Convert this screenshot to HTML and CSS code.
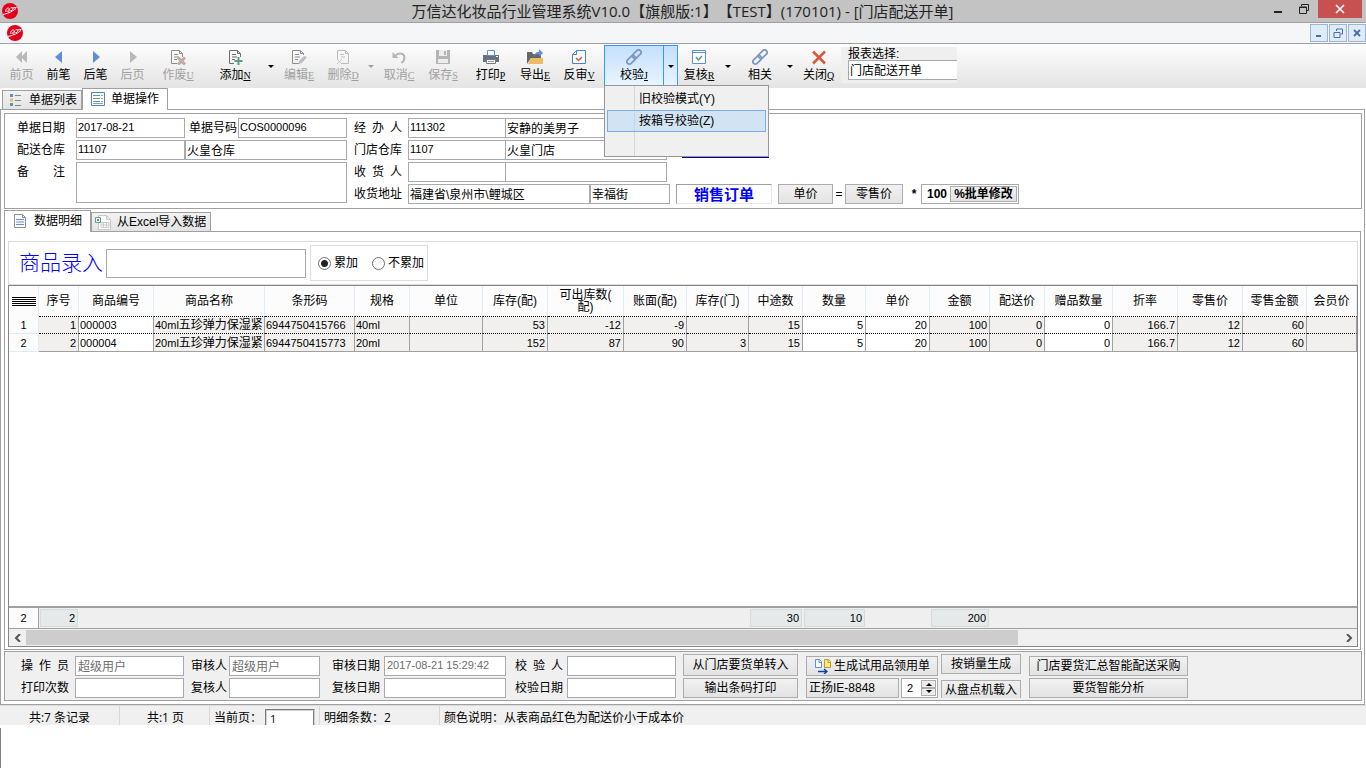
FILE: index.html
```html
<!DOCTYPE html>
<html lang="zh-CN">
<head>
    <meta charset="UTF-8">
    <meta name="viewport" content="width=device-width, initial-scale=1.0">
    <title>万信达化妆品行业管理系统V10.0</title>
    <link rel="stylesheet" href="styles.css">
</head>
<body>
    <svg class="sprite" aria-hidden="true">
        <symbol id="i-logo" viewBox="0 0 16 16">
            <circle cx="8" cy="8" r="8" fill="#e2001a"/>
            <path d="M1 11.500C5 10.500 9 9.500 14 5.500M4 9C3 6 6 4 7.500 5.500M5.500 8.500c1-3 3-2 2.500-1S6 9 6 9M8.500 5c2-1 3 0 2 1.500L9 8M10.500 5l4-.5" fill="none" stroke="#fff" stroke-width="1"/>
        </symbol>
        <symbol id="i-first" viewBox="0 0 16 16"><path d="M8 2v12L2 8zM13 2v12L7 8z" fill="#b9b9b9"/></symbol>
        <symbol id="i-prev" viewBox="0 0 16 16"><path d="M11 2v12L4 8z" fill="#5f8fd8"/></symbol>
        <symbol id="i-next" viewBox="0 0 16 16"><path d="M5 2v12l7-6z" fill="#5f8fd8"/></symbol>
        <symbol id="i-last" viewBox="0 0 16 16"><path d="M5 2v12l7-6z" fill="#b9b9b9"/></symbol>
        <symbol id="i-void" viewBox="0 0 16 16">
            <path d="M7 14.500H1.500v-13h8l3 3V8M9.500 1.500v3h3M4 5.500h4M4 8h5M4 10.500h3" fill="none" stroke="#8c8c8c"/>
            <path d="M8 8.500l7 7M15 8.500l-7 7" stroke="#b9a9a9" stroke-width="3"/>
            <path d="M9.500 10l4 4M13.500 10l-4 4" stroke="#d9a9a4" stroke-width="1"/>
        </symbol>
        <symbol id="i-add" viewBox="0 0 16 16">
            <path d="M7 14.500H2.500v-13h8l3 3V8M10.500 1.500v3h3M5 5.500h4M5 8h5M5 10.500h3" fill="none" stroke="#6f6f6f"/>
            <path d="M11.500 8v8M7.500 12h8" stroke="#5d9e8a" stroke-width="2"/>
        </symbol>
        <symbol id="i-edit" viewBox="0 0 16 16">
            <path d="M8 14.500H1.500v-13h8l3 3V6M9.500 1.500v3h3M4 5.500h4M4 8h5M4 10.500h3" fill="none" stroke="#8c8c8c"/>
            <path d="M8 12l5-5 3 1-5 6-3 1z" fill="#b9bdc6"/>
        </symbol>
        <symbol id="i-delete" viewBox="0 0 16 16">
            <path d="M2.500 10V1.500h8l3 3v10H7M10.500 1.500v3h3M5 5.500h4M6 8h4" fill="none" stroke="#bcbcbc"/>
            <path d="M2 10l5 5M7 10l-5 5" stroke="#c6c6c6"/>
        </symbol>
        <symbol id="i-undo" viewBox="0 0 16 16">
            <path d="M1.500 3v6h6z" fill="#b5b5b5"/>
            <path d="M4 7c3-4 9-3 9.500 1 0 3-1.500 5-3 6" fill="none" stroke="#b5b5b5" stroke-width="2"/>
        </symbol>
        <symbol id="i-save" viewBox="0 0 16 16">
            <path d="M1 1h14v14H1z" fill="#b5b5b5"/><path d="M4 1h8v6H4zM3 10h10v4H3z" fill="#ececec"/><path d="M9 2h2v4H9z" fill="#b5b5b5"/>
        </symbol>
        <symbol id="i-print" viewBox="0 0 16 16">
            <path d="M0 6h16v7H0z" fill="#66717f"/><path d="M4.500 1.500h7v5h-7z" fill="#fff" stroke="#5f8fd8"/>
            <path d="M3.500 10.500h9v4h-9z" fill="#fff" stroke="#777"/><path d="M5 12.500h6" stroke="#999"/><path d="M13 7.500h2" stroke="#fff"/>
        </symbol>
        <symbol id="i-export" viewBox="0 0 16 16">
            <path d="M0 3h5l1 2h8v4H4l-4 6z" fill="#666"/><path d="M4 9h12v6H1z" fill="#ecbd63"/>
            <path d="M7 8c0-3 2-5 5-5V0l4 4-4 4V5C9 5 8 6 7 8z" fill="#5f8fd8"/>
        </symbol>
        <symbol id="i-unaudit" viewBox="0 0 16 16">
            <path d="M5.500 1.500h9v13h-13v-9zM5.500 1.500v4h-4" fill="#fff" stroke="#4b82d8"/>
            <path d="M5 9l2.500 2.500L11 8" fill="none" stroke="#d8543c" stroke-width="1.500"/>
        </symbol>
        <symbol id="i-link" viewBox="0 0 16 16">
            <g fill="none" stroke="#7c97c4" stroke-width="1.800" transform="rotate(-45 8 8)">
                <rect x="-1" y="5.500" width="10" height="5" rx="2.500"/><rect x="7" y="5.500" width="10" height="5" rx="2.500"/>
            </g>
        </symbol>
        <symbol id="i-check" viewBox="0 0 16 16">
            <path d="M1.500 1.500h13v13h-13zM1 3.500h14" fill="#fff" stroke="#5f8fd8"/>
            <path d="M5 8l2.500 3L11 7" fill="none" stroke="#5d9e8a" stroke-width="1.500"/>
        </symbol>
        <symbol id="i-close" viewBox="0 0 16 16"><path d="M2 2.500l12 12M14 2.500l-12 12" stroke="#d9593f" stroke-width="2.500"/></symbol>
        <symbol id="i-list" viewBox="0 0 16 16">
            <path d="M2 2h3v3H2z" fill="#5f8fd8"/><path d="M2 6.500h3v3H2z" fill="#ecbd63"/><path d="M2 11h3v3H2z" fill="#5d9e8a"/>
            <path d="M7 3.500h6M7 8.500h6M7 13.500h6" stroke="#888"/>
        </symbol>
        <symbol id="i-form" viewBox="0 0 16 16">
            <path d="M1.500 1.500h13v13h-13z" fill="#fff" stroke="#4b82d8"/>
            <path d="M3 4.500h7M3 7.500h7M3 10.500h7" stroke="#5d9e8a"/><path d="M11 4.500h2M11 7.500h2M11 10.500h2M3 12.500h10" stroke="#9a9a9a"/>
        </symbol>
        <symbol id="i-doc" viewBox="0 0 16 16">
            <path d="M2.500 1.500h8l3 3v10h-11zM10.500 1.500v3h3" fill="#fff" stroke="#8c8c8c"/>
            <path d="M4 6.500h8M4 9h8M4 11.500h8" stroke="#5f8fd8"/>
        </symbol>
        <symbol id="i-excel" viewBox="0 0 16 16">
            <path d="M3.500 1.500h8l4 4v10h-12zM11.500 1.500v4h4" fill="#fff" stroke="#c9c9c9"/>
            <path d="M6 8.500h8v5H6zM6 11h8M8.500 8.500v5M11.500 8.500v5" fill="none" stroke="#c9c9c9"/>
            <path d="M.5 3.500h5v5h-5zM2 5l2 2M4 5L2 7" fill="#fff" stroke="#5d9e8a"/>
        </symbol>
        <symbol id="i-copy" viewBox="0 0 18 16">
            <path d="M1.500 1.500h4l2 2v6h-6zM5 1.500v3h3" fill="#fff" stroke="#5f8fd8"/>
            <path d="M10.500 1.500h4l2 2v6h-6zM14 1.500v3h3" fill="#ffe98a" stroke="#c59a16"/>
            <path d="M4 13.500h9M10 11l3 2.500-3 2.500" fill="none" stroke="#0b3fa8" stroke-width="1.300"/>
        </symbol>
    </svg>

    <header class="titlebar">
        <svg class="logo"><use href="#i-logo"/></svg>
        <h1>万信达化妆品行业管理系统V10.0【旗舰版:1】【TEST】(170101) - [门店配送开单]</h1>
        <div class="win-buttons">
            <button type="button" aria-label="最小化"><svg viewBox="0 0 12 12"><path d="M2 9h8" stroke="#222" stroke-width="2"/></svg></button>
            <button type="button" aria-label="还原"><svg viewBox="0 0 12 12"><path d="M3.500 3V1.500h7v6H9M1.500 4h7v6.500h-7zM1 4.500h8" fill="none" stroke="#222"/></svg></button>
            <button type="button" class="win-close" aria-label="关闭"><svg viewBox="0 0 12 12"><path d="M2 2l8 8M10 2l-8 8" stroke="#fff" stroke-width="1.600"/></svg></button>
        </div>
    </header>

    <div class="menubar">
        <svg class="logo"><use href="#i-logo"/></svg>
        <div class="mdi-buttons">
            <button type="button" aria-label="最小化窗口"><svg viewBox="0 0 12 12"><path d="M3 9h5" stroke="#4a6ea0" stroke-width="2"/></svg></button>
            <button type="button" aria-label="还原窗口"><svg viewBox="0 0 12 12"><path d="M4.500 4V2h6v5H9M2 5.500h6v5H2z" fill="none" stroke="#4a6ea0"/></svg></button>
            <button type="button" aria-label="关闭窗口"><svg viewBox="0 0 12 12"><path d="M3 3l6 6M9 3l-6 6" stroke="#4a6ea0" stroke-width="1.800"/></svg></button>
        </div>
    </div>

    <nav class="toolbar">
        <button type="button" disabled><svg><use href="#i-first"/></svg><span>前页</span></button>
        <button type="button"><svg><use href="#i-prev"/></svg><span>前笔</span></button>
        <button type="button"><svg><use href="#i-next"/></svg><span>后笔</span></button>
        <button type="button" disabled><svg><use href="#i-last"/></svg><span>后页</span></button>
        <button type="button" disabled><svg><use href="#i-void"/></svg><span>作废<u>U</u></span></button>
        <button type="button"><svg><use href="#i-add"/></svg><span>添加<u>N</u></span></button>
        <button type="button" class="arrow" aria-label="添加选项"></button>
        <button type="button" disabled><svg><use href="#i-edit"/></svg><span>编辑<u>E</u></span></button>
        <button type="button" disabled><svg><use href="#i-delete"/></svg><span>删除<u>D</u></span></button>
        <button type="button" class="arrow" disabled aria-label="删除选项"></button>
        <button type="button" disabled><svg><use href="#i-undo"/></svg><span>取消<u>C</u></span></button>
        <button type="button" disabled><svg><use href="#i-save"/></svg><span>保存<u>S</u></span></button>
        <button type="button"><svg><use href="#i-print"/></svg><span>打印<u>P</u></span></button>
        <button type="button"><svg><use href="#i-export"/></svg><span>导出<u>E</u></span></button>
        <button type="button"><svg><use href="#i-unaudit"/></svg><span>反审<u>V</u></span></button>
        <div class="split">
            <button type="button"><svg><use href="#i-link"/></svg><span>校验<u>J</u></span></button>
            <button type="button" class="arrow" aria-label="校验选项"></button>
            <ul class="menu">
                <li><button type="button">旧校验模式(Y)</button></li>
                <li><button type="button" class="selected">按箱号校验(Z)</button></li>
            </ul>
        </div>
        <button type="button"><svg><use href="#i-check"/></svg><span>复核<u>R</u></span></button>
        <button type="button" class="arrow" aria-label="复核选项"></button>
        <button type="button"><svg><use href="#i-link"/></svg><span>相关</span></button>
        <button type="button" class="arrow" aria-label="相关选项"></button>
        <button type="button"><svg><use href="#i-close"/></svg><span>关闭<u>Q</u></span></button>
        <div class="report">
            <label for="report">报表选择:</label>
            <input type="text" id="report" value="门店配送开单">
        </div>
    </nav>

    <div class="tabs">
        <button type="button" class="tab"><svg><use href="#i-list"/></svg>单据列表</button>
        <button type="button" class="tab active"><svg><use href="#i-form"/></svg>单据操作</button>
    </div>

    <main class="document">
        <form class="bill">
            <div class="bill-left">
                <div class="line">
                    <label for="billDate">单据日期</label>
                    <input type="text" id="billDate" class="num w-code" value="2017-08-21">
                    <label for="billNo" class="tight">单据号码</label>
                    <input type="text" id="billNo" class="num w-fill" value="COS0000096">
                </div>
                <div class="line">
                    <label for="fromStore">配送仓库</label>
                    <input type="text" id="fromStore" class="num w-code" value="11107">
                    <input type="text" class="w-fill" value="火皇仓库" aria-label="配送仓库名称">
                </div>
                <div class="line">
                    <label for="remark">备 注</label>
                    <textarea id="remark" class="w-fill"></textarea>
                </div>
            </div>
            <div class="bill-right">
                <div class="line">
                    <label for="handler">经 办 人</label>
                    <input type="text" id="handler" class="num w-id" value="111302">
                    <input type="text" class="w-name" value="安静的美男子" aria-label="经办人姓名">
                </div>
                <div class="line">
                    <label for="toStore">门店仓库</label>
                    <input type="text" id="toStore" class="num w-id" value="1107">
                    <input type="text" class="w-name" value="火皇门店" aria-label="门店仓库名称">
                    <span class="blue-rule"></span>
                </div>
                <div class="line">
                    <label for="receiver">收 货 人</label>
                    <input type="text" id="receiver" class="w-id">
                    <input type="text" class="w-name" aria-label="收货人姓名">
                </div>
                <div class="line">
                    <label for="address">收货地址</label>
                    <input type="text" id="address" class="w-address" value="福建省\泉州市\鲤城区">
                    <input type="text" class="w-street" value="幸福街" aria-label="街道">
                    <strong class="order-type">销售订单</strong>
                    <button type="button" class="btn btn-price">单价</button>
                    <span class="sign">=</span>
                    <button type="button" class="btn btn-retail">零售价</button>
                    <span class="sign star">*</span>
                    <span class="percent">
                        <input type="text" value="100" aria-label="百分比">
                        <button type="button" class="btn">%批单修改</button>
                    </span>
                </div>
            </div>
        </form>

        <div class="tabs inner">
            <button type="button" class="tab active"><svg><use href="#i-doc"/></svg>数据明细</button>
            <button type="button" class="tab"><svg><use href="#i-excel"/></svg>从Excel导入数据</button>
        </div>

        <section class="detail">
            <div class="entry">
                <label for="goods">商品录入</label>
                <input type="text" id="goods">
                <div class="mode">
                    <label><input type="radio" name="mode" checked>累加</label>
                    <label><input type="radio" name="mode">不累加</label>
                </div>
            </div>

            <div class="grid">
                <div class="grid-body">
                    <table>
                        <colgroup>
                            <col class="c30"><col class="c40"><col class="c75"><col class="c111"><col class="c90"><col class="c55"><col class="c73"><col class="c65"><col class="c76"><col class="c63"><col class="c62"><col class="c54"><col class="c63"><col class="c64"><col class="c60"><col class="c55"><col class="c68"><col class="c65"><col class="c65"><col class="c64"><col>
                        </colgroup>
                        <thead>
                            <tr>
                                <th><span class="lines"></span></th>
                                <th>序号</th>
                                <th>商品编号</th>
                                <th>商品名称</th>
                                <th>条形码</th>
                                <th>规格</th>
                                <th>单位</th>
                                <th>库存(配)</th>
                                <th>可出库数(<br>配)</th>
                                <th>账面(配)</th>
                                <th>库存(门)</th>
                                <th>中途数</th>
                                <th>数量</th>
                                <th>单价</th>
                                <th>金额</th>
                                <th>配送价</th>
                                <th>赠品数量</th>
                                <th>折率</th>
                                <th>零售价</th>
                                <th>零售金额</th>
                                <th>会员价</th>
                            </tr>
                        </thead>
                        <tbody>
                            <tr class="current">
                                <th>1</th>
                                <td>1</td>
                                <td class="text edit">000003</td>
                                <td class="text">40ml<span>五珍弹力保湿紧</span></td>
                                <td class="text">6944750415766</td>
                                <td class="text">40ml</td>
                                <td></td>
                                <td>53</td>
                                <td>-12</td>
                                <td>-9</td>
                                <td></td>
                                <td>15</td>
                                <td class="edit">5</td>
                                <td class="edit">20</td>
                                <td>100</td>
                                <td>0</td>
                                <td class="edit">0</td>
                                <td>166.7</td>
                                <td>12</td>
                                <td>60</td>
                                <td></td>
                            </tr>
                            <tr>
                                <th>2</th>
                                <td>2</td>
                                <td class="text edit">000004</td>
                                <td class="text">20ml<span>五珍弹力保湿紧</span></td>
                                <td class="text">6944750415773</td>
                                <td class="text">20ml</td>
                                <td></td>
                                <td>152</td>
                                <td>87</td>
                                <td>90</td>
                                <td>3</td>
                                <td>15</td>
                                <td class="edit">5</td>
                                <td class="edit">20</td>
                                <td>100</td>
                                <td>0</td>
                                <td class="edit">0</td>
                                <td>166.7</td>
                                <td>12</td>
                                <td>60</td>
                                <td></td>
                            </tr>
                        </tbody>
                    </table>
                </div>
                <table class="totals">
                    <colgroup>
                        <col class="c30"><col class="c40"><col class="c75"><col class="c111"><col class="c90"><col class="c55"><col class="c73"><col class="c65"><col class="c76"><col class="c63"><col class="c62"><col class="c54"><col class="c63"><col class="c64"><col class="c60"><col>
                    </colgroup>
                    <tr>
                        <th>2</th>
                        <td><span>2</span></td>
                        <td colspan="9"></td>
                        <td><span>30</span></td>
                        <td><span>10</span></td>
                        <td></td>
                        <td><span>200</span></td>
                        <td></td>
                    </tr>
                </table>
                <div class="scrollbar">
                    <button type="button" aria-label="向左"><svg viewBox="0 0 8 8"><path d="M6 0L2 4l4 4" fill="none" stroke="#555" stroke-width="2"/></svg></button>
                    <div class="track"><div class="thumb"></div></div>
                    <button type="button" aria-label="向右"><svg viewBox="0 0 8 8"><path d="M2 0l4 4-4 4" fill="none" stroke="#555" stroke-width="2"/></svg></button>
                </div>
            </div>
        </section>

        <section class="audit">
            <div class="pair pair-operator">
                <label for="operator">操 作 员</label><input type="text" id="operator" value="超级用户" disabled>
                <label for="prints">打印次数</label><input type="text" id="prints" disabled>
            </div>
            <div class="pair pair-auditor">
                <label for="auditor">审核人</label><input type="text" id="auditor" value="超级用户" disabled>
                <label for="checker">复核人</label><input type="text" id="checker" disabled>
            </div>
            <div class="pair pair-date">
                <label for="auditDate">审核日期</label><input type="text" id="auditDate" class="num" value="2017-08-21 15:29:42" disabled>
                <label for="checkDate">复核日期</label><input type="text" id="checkDate" disabled>
            </div>
            <div class="pair pair-verify">
                <label for="verifier">校 验 人</label><input type="text" id="verifier" disabled>
                <label for="verifyDate">校验日期</label><input type="text" id="verifyDate" disabled>
            </div>
            <div class="actions a-transfer">
                <button type="button" class="btn">从门店要货单转入</button>
                <button type="button" class="btn">输出条码打印</button>
            </div>
            <div class="actions a-sample">
                <button type="button" class="btn"><svg><use href="#i-copy"/></svg>生成试用品领用单</button>
                <div class="device">
                    <button type="button" class="btn">正扬IE-8848</button>
                    <span class="spinner">
                        <input type="text" value="2" aria-label="端口">
                        <span class="spin">
                            <button type="button" aria-label="增加"><svg viewBox="0 0 6 4"><path d="M0 4l3-3 3 3z"/></svg></button>
                            <button type="button" aria-label="减少"><svg viewBox="0 0 6 4"><path d="M0 0l3 3 3-3z"/></svg></button>
                        </span>
                    </span>
                </div>
            </div>
            <div class="actions a-sales">
                <button type="button" class="btn">按销量生成</button>
                <button type="button" class="btn">从盘点机载入</button>
            </div>
            <div class="actions a-smart">
                <button type="button" class="btn">门店要货汇总智能配送采购</button>
                <button type="button" class="btn">要货智能分析</button>
            </div>
        </section>
    </main>

    <footer class="statusbar">
        <span class="s-records">共:7 条记录</span>
        <span class="s-pages">共:1 页</span>
        <span class="s-current"><label for="page">当前页：</label><input type="text" id="page" value="1"></span>
        <span class="s-lines">明细条数：2</span>
        <span class="s-note">颜色说明：从表商品红色为配送价小于成本价</span>
    </footer>
    <div class="desktop"></div>
</body>
</html>
```
FILE: styles.css
```css
* {
    box-sizing: border-box;
}

body {
    margin: 0;
    height: 100vh;
    display: flex;
    flex-direction: column;
    overflow: hidden;
    background-color: #fff;
    color: #000;
    font: 12px/16px "Liberation Sans", "Noto Sans CJK SC", sans-serif;
    text-spacing-trim: space-all;
}

button, input, textarea {
    margin: 0;
    padding: 0;
    border: none;
    border-radius: 0;
    background: none;
    color: inherit;
    font: inherit;
}

svg {
    width: 16px;
    height: 16px;
    flex: none;
}

.sprite {
    position: absolute;
    width: 0;
    height: 0;
}

/* title bar */
.titlebar {
    height: 23px;
    flex: none;
    display: flex;
    align-items: center;
    padding-left: 2px;
    background-color: #c3c3c3;
    border-bottom: 1px solid #a0a0a0;
}

.titlebar h1 {
    flex: 1;
    margin: 0;
    padding-left: 82px;
    text-align: center;
    font: 15px/22px "Open Sans", "Noto Sans CJK SC", sans-serif;
    color: #222;
    white-space: nowrap;
}

.win-buttons {
    display: flex;
    align-self: flex-start;
    margin-right: 4px;
}

.win-buttons button {
    width: 26px;
    height: 18px;
    display: flex;
    align-items: center;
    justify-content: center;
}

.win-buttons svg, .mdi-buttons svg {
    width: 12px;
    height: 12px;
}

.win-buttons .win-close {
    width: 44px;
    margin-left: 1px;
    background-color: #c75050;
}

.menubar {
    height: 21px;
    flex: none;
    display: flex;
    justify-content: space-between;
    align-items: center;
    padding-left: 7px;
    background-color: #f4f6f8;
    border-bottom: 1px solid #a0a0a0;
}

.mdi-buttons {
    display: flex;
    gap: 1px;
}

.mdi-buttons button {
    width: 18px;
    height: 18px;
    display: flex;
    align-items: center;
    justify-content: center;
    background-color: #deebf8;
    border: 1px solid #9db5d2;
}

/* toolbar */
.toolbar {
    height: 44px;
    flex: none;
    display: grid;
    grid-template-columns: repeat(4, 37px) 54px 60px 12px 44px 44px 12px 44px 44px 51px 38px 50px 74px 42px 16px 48px 12px 45px 116px;
    padding-left: 3px;
    background: linear-gradient(#fdfdfd, #e4e4e4);
}

.toolbar button {
    display: flex;
    flex-direction: column;
    align-items: center;
    gap: 2px;
    padding-top: 5px;
    white-space: nowrap;
}

.toolbar button:disabled {
    color: #a0a0a0;
}

.toolbar u {
    font-family: "Liberation Serif", serif;
    font-size: 10px;
}

.toolbar .arrow {
    padding-top: 21px;
}

.arrow::after {
    content: "";
    border: 3px solid transparent;
    border-top-color: currentColor;
    border-bottom: none;
}

.split {
    position: relative;
    height: 41px;
    margin-top: 1px;
    display: grid;
    grid-template-columns: 1fr 14px;
    border: 1px solid #3399ff;
    background: linear-gradient(#c4e0fd, #e9f4ff);
}

.toolbar .split > button {
    padding-top: 3px;
}

.toolbar .split > .arrow {
    padding-top: 19px;
    border-left: 1px solid #3399ff;
}

.menu {
    position: absolute;
    top: 39px;
    left: -1px;
    z-index: 2;
    width: 165px;
    height: 72px;
    margin: 0;
    padding: 2px;
    list-style: none;
    border: 1px solid #979797;
    background: linear-gradient(90deg, transparent 29px, #d5d5d5 29px, #d5d5d5 30px, transparent 30px) #f0f0f0;
}

.toolbar .menu button {
    display: block;
    width: 100%;
    height: 22px;
    padding: 0 0 0 31px;
    border: 1px solid transparent;
    text-align: left;
}

.toolbar .menu .selected {
    background-color: rgba(180, 215, 245, 0.5);
    border-color: #78aee5;
}

.report {
    height: 36px;
    margin-top: 3px;
    padding-left: 7px;
    background-color: #efefef;
}

.report label {
    display: block;
    height: 13px;
    line-height: 14px;
}

.report input {
    display: block;
    width: 100%;
    height: 20px;
    padding: 0 0 2px 1px;
    background-color: #fff;
    border: 1px solid #a9a9b0;
    border-right: none;
}

/* tabs */
.tabs {
    height: 21px;
    flex: none;
    display: flex;
    align-items: flex-end;
    padding-left: 2px;
}

.tab {
    height: 19px;
    display: flex;
    align-items: center;
    gap: 5px;
    padding: 0 4px 0 5px;
    background: linear-gradient(#f2f2f2, #e3e3e3);
    border: 1px solid #a0a0a0;
    border-bottom: none;
    white-space: nowrap;
}

.tab.active {
    position: relative;
    height: 22px;
    margin-bottom: -1px;
    padding: 0 8px 2px 7px;
    background: #fff;
}

.tabs.inner {
    margin-top: 1px;
    padding-left: 0;
}

.inner .tab {
    padding-left: 3px;
    gap: 6px;
}

.inner .tab.active {
    padding-left: 7px;
}

/* document */
.document {
    flex: 1;
    min-height: 0;
    display: flex;
    flex-direction: column;
    margin-right: 1px;
    padding: 3px;
    border: 1px solid #a0a0a0;
}

.bill {
    flex: none;
    display: flex;
    gap: 7px;
    padding: 4px 0 4px 12px;
    border: 1px solid #a0a0a0;
    margin-right: -1px;
}

.bill-left {
    width: 330px;
}

.bill-left, .bill-right {
    display: flex;
    flex-direction: column;
    gap: 2px;
}

.line {
    display: flex;
}

.line label {
    width: 48px;
    margin-right: 11px;
    text-align-last: justify;
    line-height: 20px;
}

.bill-right label {
    margin-right: 6px;
}

.line label.tight {
    margin: 0 1px 0 4px;
}

.line > input, .line > textarea {
    height: 20px;
    padding: 0 0 2px 1px;
    border: 1px solid #a9a9b0;
    background-color: #fff;
}

.line > textarea {
    height: 41px;
    resize: none;
}

.num {
    font-size: 11px;
}

.w-code {
    width: 109px;
}

.w-fill {
    flex: 1;
    min-width: 0;
}

.w-id {
    width: 98px;
}

.w-name {
    width: 162px;
    margin-left: -1px;
}

.w-address {
    width: 182px;
}

.w-street {
    width: 80px;
}

.blue-rule {
    width: 87px;
    height: 18px;
    margin-left: 15px;
    border-bottom: 1px solid #0000a0;
}

.order-type {
    width: 96px;
    height: 20px;
    margin: 0 6px;
    border: 1px solid #e8e8e8;
    border-top-color: #a0a0a0;
    border-left-color: #a0a0a0;
    color: #0000ff;
    font-size: 15px;
    line-height: 19px;
    text-align: center;
}

.btn {
    height: 20px;
    display: flex;
    align-items: center;
    justify-content: center;
    gap: 2px;
    border: 1px solid #adadad;
    background: linear-gradient(#f1f1f1, #e3e3e3);
    white-space: nowrap;
}

.btn-price {
    width: 55px;
}

.sign {
    width: 12px;
    text-align: center;
    line-height: 20px;
}

.btn-retail {
    width: 58px;
}

.star {
    width: 18px;
    padding-left: 4px;
    font-weight: bold;
}

.percent {
    display: flex;
    align-items: center;
    width: 98px;
    height: 20px;
    padding: 0 1px 0 5px;
    border: 1px solid #a9a9b0;
}

.percent input {
    width: 23px;
    font-weight: bold;
}

.percent .btn {
    flex: 1;
    height: 16px;
    font-weight: bold;
}

/* goods entry */
.detail {
    flex: 1;
    min-height: 0;
    display: flex;
    flex-direction: column;
    padding: 9px 2px 2px 3px;
    border: 1px solid #a0a0a0;
}

.entry {
    flex: none;
    height: 44px;
    display: flex;
    align-items: center;
    padding-left: 10px;
    border: 1px solid #dcdcdc;
}

.entry > label {
    color: #0000ff;
    font-size: 21px;
    font-weight: 300;
    line-height: 28px;
}

.entry > input {
    width: 200px;
    height: 29px;
    margin: 0 4px 0 3px;
    border: 1px solid #a9a9b0;
}

.mode {
    display: flex;
    gap: 14px;
    align-items: center;
    height: 36px;
    padding: 0 3px 0 7px;
    border: 1px solid #dcdcdc;
}

.mode label {
    display: flex;
    align-items: center;
    gap: 3px;
}

.mode input {
    appearance: none;
    width: 13px;
    height: 13px;
    border: 1px solid #707070;
    border-radius: 50%;
}

.mode input:checked {
    background: radial-gradient(#222 3px, #fff 4px);
}

/* grid */
.grid {
    flex: 1;
    min-height: 0;
    display: flex;
    flex-direction: column;
    border: 1px solid #858590;
}

.grid-body {
    flex: 1;
    overflow: hidden;
    border-bottom: 2px solid #a0a0a0;
}

table {
    width: 100%;
    table-layout: fixed;
    border-collapse: separate;
    border-spacing: 0;
}

.c30 { width: 30px; }
.c40 { width: 40px; }
.c54 { width: 54px; }
.c55 { width: 55px; }
.c60 { width: 60px; }
.c62 { width: 62px; }
.c63 { width: 63px; }
.c64 { width: 64px; }
.c65 { width: 65px; }
.c68 { width: 68px; }
.c73 { width: 73px; }
.c75 { width: 75px; }
.c76 { width: 76px; }
.c90 { width: 90px; }
.c111 { width: 111px; }

th {
    padding: 0;
    font-weight: normal;
    background-color: #fcfcfd;
    border-right: 1px solid #e0ebf8;
    white-space: nowrap;
}

thead th {
    height: 30px;
    line-height: 12px;
}

tbody th {
    border-bottom: 1px solid #e0ebf8;
    font-size: 11px;
}

.lines {
    display: block;
    height: 9px;
    margin: 0 2px 0 3px;
    background: repeating-linear-gradient(#000 0, #000 1px, transparent 1px, transparent 2px);
}

td {
    height: 18px;
    padding: 0 2px;
    overflow: hidden;
    background-color: #f2f0ef;
    border-right: 1px solid #a0a0a0;
    border-bottom: 1px solid #a0a0a0;
    font-size: 11px;
    line-height: 16px;
    text-align: right;
    white-space: nowrap;
}

td.text {
    padding: 0 0 0 1px;
    text-align: left;
}

td.text span {
    font-size: 12px;
}

td.edit {
    background-color: #fff;
}

.current td {
    border-top: 1px dotted #000;
    border-bottom: 1px dotted #000;
}

.totals {
    background-color: #efefef;
    border-bottom: 1px solid #a0a0a0;
}

.totals th {
    height: 20px;
    border-color: #a0a0a0;
    border-bottom: none;
}

.totals td {
    height: 20px;
    padding: 0 1px;
    border: none;
    background: none;
}

.totals span {
    display: block;
    height: 18px;
    padding-right: 2px;
    background-color: #e5e9ea;
    border: 1px solid #d6dadb;
}

.scrollbar {
    height: 17px;
    flex: none;
    display: flex;
    padding: 1px 0;
    background-color: #f0f0f0;
}

.scrollbar button {
    width: 17px;
    display: flex;
    align-items: center;
    justify-content: center;
}

.scrollbar svg {
    width: 8px;
    height: 8px;
}

.track {
    flex: 1;
}

.thumb {
    width: 75.5%;
    height: 100%;
    background-color: #cdcdcd;
}

/* audit panel */
.audit {
    flex: none;
    display: flex;
    align-items: flex-start;
    height: 50px;
    margin-top: 1px;
    margin-right: -1px;
    padding: 4px 0 0 16px;
    background-color: #f0f0f0;
    border: 1px solid #a0a0a0;
}

.pair {
    display: grid;
    grid-template-rows: 20px 20px;
    gap: 2px 0;
    align-items: center;
}

.pair label {
    text-align-last: justify;
}

.pair input {
    width: 100%;
    height: 20px;
    padding: 0 0 2px 2px;
    border: 1px solid #a9a9b0;
    background-color: #fff;
    color: #6d6d6d;
}

.pair-operator {
    grid-template-columns: 48px 109px;
    column-gap: 6px;
    margin-right: 7px;
}

.pair-auditor {
    grid-template-columns: 36px 91px;
    column-gap: 2px;
    margin-right: 12px;
}

.pair-date {
    grid-template-columns: 48px 122px;
    column-gap: 4px;
    margin-right: 9px;
}

.pair-verify {
    grid-template-columns: 48px 109px;
    column-gap: 4px;
    margin-right: 7px;
}

.actions {
    display: flex;
    flex-direction: column;
    gap: 2px;
    margin-right: 8px;
}

.actions > .btn {
    width: 100%;
}

.a-transfer {
    width: 115px;
    margin-top: -2px;
}

.a-transfer .btn:first-child {
    height: 22px;
}

.a-sample {
    width: 132px;
    margin-right: 3px;
}

.a-sample svg {
    width: 18px;
}

.a-sales {
    width: 80px;
    margin-top: -2px;
    gap: 6px;
}

.a-sales .btn:last-child {
    height: 18px;
    border-bottom: none;
}

.a-smart {
    width: 159px;
}

.device {
    display: flex;
    gap: 2px;
}

.device .btn {
    width: 93px;
    padding-left: 2px;
    justify-content: flex-start;
}

.spinner {
    flex: 1;
    display: flex;
    height: 20px;
    padding: 1px;
    border: 1px solid #a9a9b0;
    background-color: #fff;
}

.spinner input {
    width: 18px;
    padding-left: 4px;
    font-size: 11px;
}

.spin {
    flex: 1;
    display: flex;
    flex-direction: column;
}

.spin button {
    flex: 1;
    display: flex;
    align-items: center;
    justify-content: center;
    border: 1px solid #adadad;
    background-color: #ececec;
}

.spin svg {
    width: 6px;
    height: 4px;
}

/* status bar */
.statusbar {
    height: 20px;
    flex: none;
    display: flex;
    overflow: hidden;
    border-top: 1px solid #dcdcdc;
    background-color: #f0f0f0;
    font-family: "Open Sans", "Noto Sans CJK SC", sans-serif;
}

.statusbar > span {
    padding: 4px 0 0 4px;
    border-right: 1px solid #d7d7d7;
    white-space: nowrap;
}

.statusbar .s-records {
    width: 120px;
    padding-left: 0;
    text-align: center;
}

.statusbar .s-pages {
    width: 90px;
    padding-left: 2px;
    text-align: center;
}

.statusbar .s-current {
    width: 110px;
    display: flex;
    justify-content: space-between;
    padding-right: 4px;
}

.s-current input {
    width: 50px;
    height: 20px;
    margin-top: -1px;
    padding: 0 0 2px 3px;
    border: 2px groove #d0d0d0;
    background-color: #fff;
    font-size: 11px;
}

.s-lines {
    width: 120px;
}

.statusbar .s-note {
    border-right: none;
}

.desktop {
    height: 40px;
    flex: none;
    margin-top: 3px;
    border-left: 1px solid #808080;
}
```
